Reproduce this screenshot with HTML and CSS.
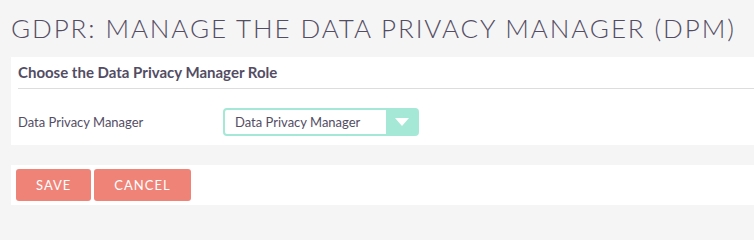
FILE: index.html
```html
<!DOCTYPE html>
<html>
<head>
<meta charset="utf-8">
<link rel="stylesheet" href="styles.css">
</head>
<body>
<h1 class="page-title">GDPR: Manage the Data Privacy Manager (DPM)</h1>
<div class="panel">
  <h2 class="panel-heading">Choose the Data Privacy Manager Role</h2>
  <div class="row">
    <label class="row-label">Data Privacy Manager</label>
    <div class="select">
      <span class="select-value">Data Privacy Manager</span>
      <span class="select-arrow"><svg width="14" height="8" viewBox="0 0 14 8"><path d="M0 0H14L7 8Z" fill="#fff"/></svg></span>
    </div>
  </div>
</div>
<div class="actions">
  <button class="btn">Save</button>
  <button class="btn">Cancel</button>
</div>
</body>
</html>
```
FILE: styles.css
```css
html, body {
  margin: 0;
  padding: 0;
  background: #f5f5f5;
  font-family: Lato, "Open Sans", sans-serif;
  color: #534d64;
}
body {
  padding: 0 0 0 11px;
}
.page-title {
  margin: 0;
  padding: 13px 0 0 0;
  height: 44px;
  box-sizing: border-box;
  font-weight: 300;
  font-size: 26px;
  letter-spacing: 1.9px;
  text-transform: uppercase;
  line-height: 31px;
  color: #534d64;
  white-space: nowrap;
}
.panel {
  background: #fff;
  height: 88px;
  margin-top: 13px;
  padding: 0 0 0 7px;
  box-sizing: border-box;
}
.panel-heading {
  margin: 0;
  font-size: 15px;
  font-weight: 700;
  line-height: 18px;
  padding: 6px 0 7px 0;
  border-bottom: 1px solid #ddd;
  color: #534d64;
}
.row {
  display: flex;
  align-items: center;
  margin-top: 19px;
}
.row-label {
  width: 205px;
  font-size: 13px;
}
.select {
  display: flex;
  width: 196px;
  height: 28px;
  box-sizing: border-box;
  border: 2px solid #a5e8d6;
  border-radius: 4px;
  background: #fff;
}
.select-value {
  flex: 1;
  font-size: 13px;
  line-height: 24px;
  padding-left: 10px;
}
.select-arrow {
  width: 31px;
  background: #a5e8d6;
  display: flex;
  align-items: center;
  justify-content: center;
}
.actions {
  background: #fff;
  margin-top: 20px;
  height: 40px;
  padding: 4px 0 0 5px;
  box-sizing: border-box;
  display: flex;
  gap: 3px;
  align-items: flex-start;
}
.btn {
  height: 32px;
  border: none;
  border-radius: 3px;
  background: #f08377;
  color: #fff;
  font-family: Lato, sans-serif;
  font-size: 13px;
  letter-spacing: 1px;
  text-transform: uppercase;
  padding: 0 20px;
  cursor: pointer;
}
```
